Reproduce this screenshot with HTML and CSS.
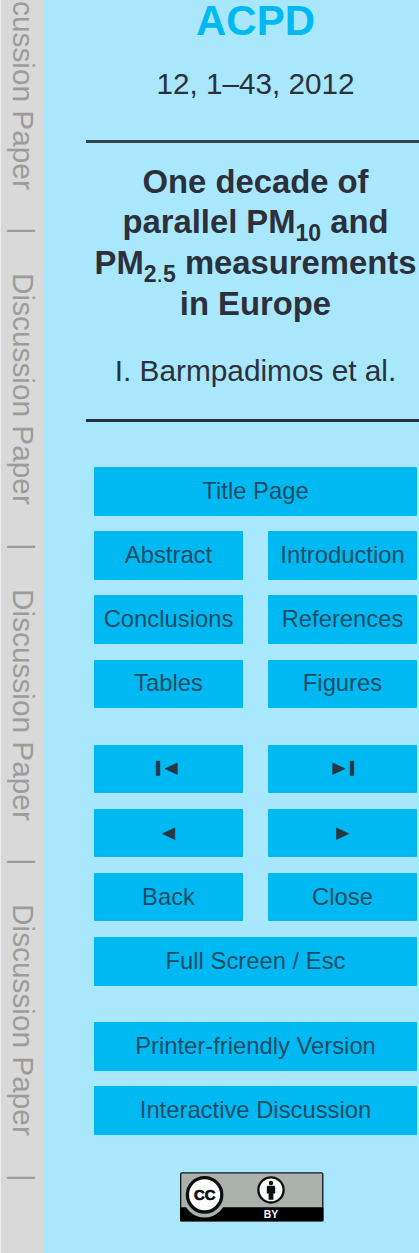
FILE: index.html
```html
<!DOCTYPE html>
<html lang="en">
<head>
<meta charset="utf-8">
<title>ACPD</title>
<link rel="stylesheet" href="styles.css">
</head>
<body>
<div class="page">
  <aside class="strip">
    <div class="segment"><span>Discussion Paper</span><span>|</span></div>
    <div class="segment"><span>Discussion Paper</span><span>|</span></div>
    <div class="segment"><span>Discussion Paper</span><span>|</span></div>
    <div class="segment"><span>Discussion Paper</span><span>|</span></div>
  </aside>
  <main class="panel">
    <h1 class="journal">ACPD</h1>
    <p class="volume">12, 1–43, 2012</p>
    <div class="rule"></div>
    <h2 class="title">One decade of<br>parallel PM<sub>10</sub> and<br>PM<sub>2<span class="point">.</span>5</sub> measurements<br>in Europe</h2>
    <p class="author">I. Barmpadimos et al.</p>
    <div class="rule rule-end"></div>
    <nav class="nav">
      <div class="group">
        <a class="button wide">Title Page</a>
        <a class="button">Abstract</a><a class="button">Introduction</a>
        <a class="button">Conclusions</a><a class="button">References</a>
        <a class="button">Tables</a><a class="button">Figures</a>
      </div>
      <div class="group">
        <a class="button" aria-label="First"><svg class="first" width="24" height="18" viewBox="0 0 24 18"><path class="ink" d="M1.2 2.100h3.600v14.400H1.200zM10 9.700 22.300 3.900v11.600z"/></svg></a>
        <a class="button" aria-label="Last"><svg width="24" height="18" viewBox="0 0 24 18"><path class="ink" d="M22.800 2.100h-3.600v14.400h3.600zM14 9.700 1.700 3.900v11.600z"/></svg></a>
        <a class="button" aria-label="Previous"><svg width="24" height="18" viewBox="0 0 24 18"><path class="ink" d="M5.500 9.700 17.800 3.900v11.600z"/></svg></a>
        <a class="button" aria-label="Next"><svg width="24" height="18" viewBox="0 0 24 18"><path class="ink" d="M17.800 9.700 5.500 3.900v11.600z"/></svg></a>
        <a class="button">Back</a><a class="button">Close</a>
        <a class="button wide">Full Screen / Esc</a>
      </div>
      <div class="group">
        <a class="button wide">Printer-friendly Version</a>
        <a class="button wide">Interactive Discussion</a>
      </div>
    </nav>
    <svg class="license" width="144" height="50" viewBox="0 0 144 50">
      <rect x=".7" y=".9" width="142.1" height="48" rx="1.2" fill="#aab2ab" stroke="#101415" stroke-width="1.3"/>
      <path d="M0 35.2h143.4v14H0z" fill="#000"/>
      <circle cx="24.6" cy="24" r="21.6" fill="#aab2ab"/>
      <circle cx="24.6" cy="22.8" r="17.2" fill="#fff" stroke="#0b0e0f" stroke-width="3.3"/>
      <text class="cc" x="24.7" y="27.800" textLength="21.5" lengthAdjust="spacingAndGlyphs">CC</text>
      <circle cx="91" cy="17.9" r="12.6" fill="#fff" stroke="#0b0e0f" stroke-width="2.3"/>
      <circle cx="91" cy="11" r="2.2" fill="#0b0e0f"/>
      <path d="M88 13.800h6q1.200 0 1.200 1.200v6.500h-1.800v6.300h-4.800v-6.300h-1.800V15q0-1.200 1.200-1.200z" fill="#0b0e0f"/>
      <text class="by" x="91" y="46" textLength="14.5" lengthAdjust="spacingAndGlyphs">BY</text>
    </svg>
  </main>
</div>
</body>
</html>
```
FILE: styles.css
```css
* { box-sizing: border-box; }
body {
  margin: 0;
  background: #a9e7fc;
  color: #2b303b;
  font-family: "Liberation Sans", Arial, sans-serif;
}
.page {
  display: flex;
  width: 419px;
  height: 1253px;
  overflow: hidden;
}
.strip {
  flex: 0 0 43.5px;
  border-left: 1.5px solid #ededed;
  background: #d9d9d9;
  color: #9c9c9c;
  overflow: hidden;
}
.segment {
  display: flex;
  gap: 37.5px;
  height: 315.4px;
  width: 44px;
  writing-mode: vertical-rl;
  font-size: 29.8px;
  line-height: 44px;
  white-space: nowrap;
}
.segment:first-child { margin-top: -42px; }
.panel {
  flex: 0 0 339px;
  margin-left: 42.5px;
  display: flex;
  flex-direction: column;
  align-items: center;
}
.journal {
  margin: 0;
  height: 65px;
  font-size: 42px;
  line-height: 41px;
  color: #00b9f2;
}
.volume {
  margin: 0;
  height: 75px;
  font-size: 29.7px;
  line-height: 38px;
}
.rule {
  width: 339px;
  height: 3px;
  background: #34434b;
}
.title {
  margin: 0;
  padding-top: 18.5px;
  height: 197px;
  font-size: 32.8px;
  line-height: 40.8px;
  text-align: center;
  white-space: nowrap;
}
.title sub {
  font-size: 23px;
  line-height: 0;
  vertical-align: -8px;
}
.point { font-weight: 400; }
.author {
  margin: 0;
  height: 79px;
  padding-top: 12px;
  font-size: 29.8px;
  line-height: 38px;
  white-space: nowrap;
}
.rule-end { background: #29303d; }
.nav {
  width: 322.5px;
  margin-top: 45px;
  display: flex;
  flex-direction: column;
  gap: 36.5px;
}
.group {
  display: grid;
  grid-template-columns: 1fr 1fr;
  column-gap: 25.5px;
  row-gap: 15.7px;
}
.button {
  display: flex;
  align-items: center;
  justify-content: center;
  height: 48.5px;
  padding-bottom: 1px;
  border-radius: 1px;
  background: #00b9f2;
  color: #194d63;
  font-size: 23.8px;
  white-space: nowrap;
}
.wide { grid-column: 1 / -1; }
.first { margin-right: 3.5px; }
.ink {
  fill: #293641;
  stroke: #293641;
  stroke-width: .6;
  stroke-linejoin: round;
}
.license {
  margin-top: 37px;
  margin-right: 7px;
}
.cc, .by {
  font-weight: 700;
  text-anchor: middle;
}
.cc { font-size: 14.5px; fill: #0b0e0f; stroke: #0b0e0f; stroke-width: .7; }
.by { font-size: 10px; fill: #fff; }
```
